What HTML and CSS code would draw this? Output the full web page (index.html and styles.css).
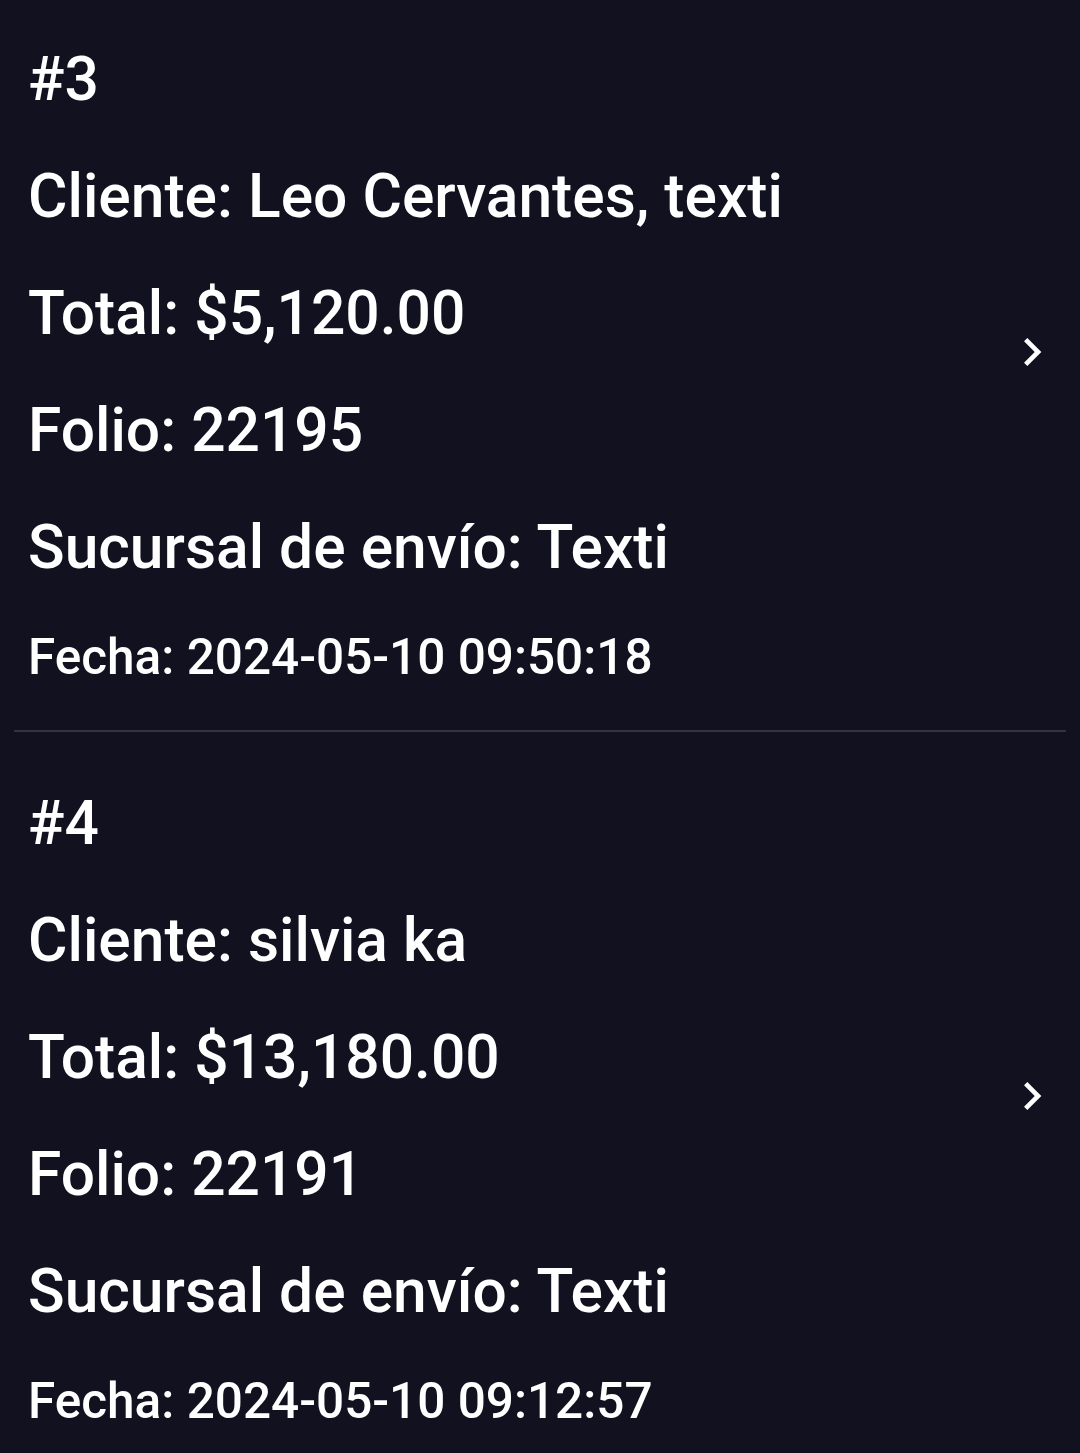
FILE: index.html
```html
<!DOCTYPE html>
<html lang="es">
<head>
    <meta charset="UTF-8">
    <meta name="viewport" content="width=device-width, initial-scale=1.0">
    <title>Pedidos</title>
    <link rel="stylesheet" href="styles.css">
</head>
<body>
    <div class="orders">
        <div class="order">
            <div class="order-info">
                <p class="line">#3</p>
                <p class="line">Cliente: Leo Cervantes, texti</p>
                <p class="line">Total: $5,120.00</p>
                <p class="line">Folio: 22195</p>
                <p class="line">Sucursal de envío: Texti</p>
                <p class="line date">Fecha: 2024-05-10 09:50:18</p>
            </div>
            <svg class="chevron" viewBox="0 0 24 24" width="56" height="56">
                <path d="M10 6L8.59 7.41 13.17 12l-4.58 4.59L10 18l6-6z" fill="#ffffff"/>
            </svg>
        </div>
        <hr class="divider">
        <div class="order">
            <div class="order-info">
                <p class="line">#4</p>
                <p class="line">Cliente: silvia ka</p>
                <p class="line">Total: $13,180.00</p>
                <p class="line">Folio: 22191</p>
                <p class="line">Sucursal de envío: Texti</p>
                <p class="line date">Fecha: 2024-05-10 09:12:57</p>
            </div>
            <svg class="chevron" viewBox="0 0 24 24" width="56" height="56">
                <path d="M10 6L8.59 7.41 13.17 12l-4.58 4.59L10 18l6-6z" fill="#ffffff"/>
            </svg>
        </div>
    </div>
</body>
</html>
```

FILE: styles.css
```css
body {
    font-family: 'Roboto', 'Liberation Sans', sans-serif;
    background-color: #12111f;
    margin: 0;
    padding: 0;
    color: #ffffff;
}

.orders {
    display: flex;
    flex-direction: column;
}

.order {
    display: flex;
    align-items: center;
    padding: 57px 20px 45px 28px;
}

.order:first-child {
    padding-top: 45px;
}

.order-info {
    flex: 1;
    display: flex;
    flex-direction: column;
    gap: 47px;
}

.line {
    margin: 0;
    font-size: 60.5px;
    line-height: 70px;
    font-weight: 500;
}

.line.date {
    font-size: 49.5px;
    line-height: 55px;
}

.chevron {
    margin-bottom: 26px;
}

.divider {
    border: none;
    height: 2px;
    background-color: #34343f;
    margin: 0 14px;
}
```
